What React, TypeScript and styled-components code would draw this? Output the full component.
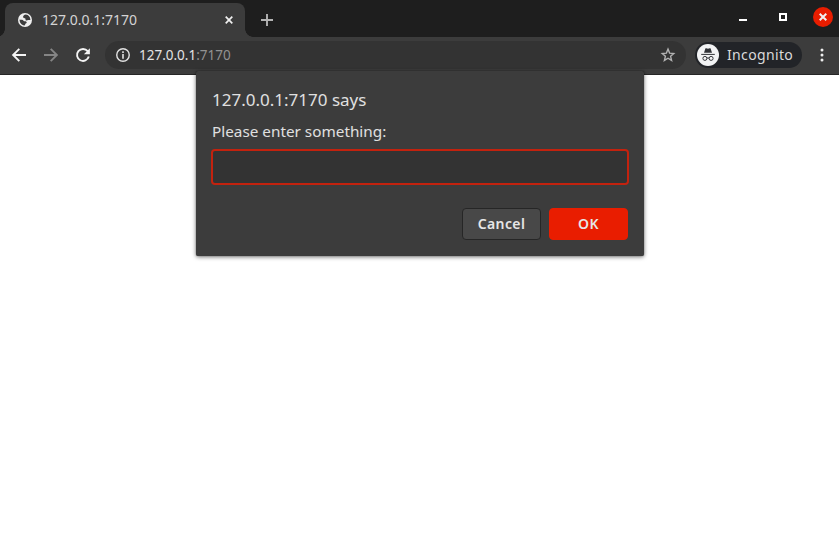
import React from 'react';
import styled, { createGlobalStyle } from 'styled-components';

const GlobalStyle = createGlobalStyle`
  * { box-sizing: border-box; }
  html, body { margin: 0; padding: 0; background: #fff; overflow: hidden; }
  body, button, input { font-family: "Noto Sans", "Open Sans", sans-serif; }
`;

const Browser = styled.div`
  width: 839px;
  height: 550px;
  display: flex;
  flex-direction: column;
  background: #fff;
  position: relative;
`;

const TabStrip = styled.header`
  height: 37px;
  flex: none;
  display: flex;
  align-items: flex-start;
  padding: 3px 6px 0 5px;
  background: #1e1e1e;
`;

const Tab = styled.div`
  width: 240px;
  height: 34px;
  display: flex;
  align-items: center;
  padding: 0 10px 0 13px;
  background: #3c3c3c;
  border-radius: 8px 8px 0 0;
  position: relative;

  &::before, &::after {
    content: "";
    position: absolute;
    bottom: 0;
    width: 8px;
    height: 8px;
  }
  &::before {
    left: -8px;
    background: radial-gradient(circle at 0 0, transparent 7.5px, #3c3c3c 8px);
  }
  &::after {
    right: -8px;
    background: radial-gradient(circle at 100% 0, transparent 7.5px, #3c3c3c 8px);
  }
`;

const TabTitle = styled.span`
  flex: 1;
  margin-left: 10px;
  font-size: 14px;
  line-height: 20px;
  color: #d4d4d4;
  white-space: nowrap;
`;

const IconButton = styled.button<{ $w: number; $h: number }>`
  width: ${(p) => p.$w}px;
  height: ${(p) => p.$h}px;
  flex: none;
  display: flex;
  align-items: center;
  justify-content: center;
  padding: 0;
  border: 0;
  background: transparent;
`;

const NewTab = styled(IconButton)`
  margin: 9px 0 0 14px;
`;

const WindowControls = styled.div`
  margin: 3px 0 0 auto;
  display: flex;
  align-items: center;
  gap: 20px;
`;

const CloseWindow = styled(IconButton)`
  border-radius: 50%;
  background: #e91d00;
`;

const Toolbar = styled.nav`
  height: 38px;
  flex: none;
  display: flex;
  align-items: center;
  padding: 0 9px 1px 11px;
  background: #3c3c3c;
  border-bottom: 1px solid #262626;
`;

const NavButtons = styled.div`
  display: flex;
  gap: 16px;
`;

const Omnibox = styled.div`
  width: 581px;
  height: 28px;
  margin-left: 14px;
  display: flex;
  align-items: center;
  padding: 0 10px;
  border-radius: 14px;
  background: #333;
`;

const Url = styled.span`
  flex: 1;
  margin-left: 8px;
  font-size: 13.5px;
  line-height: 20px;
  color: #e4e4e4;
`;

const Port = styled.span`
  color: #929292;
`;

const Profile = styled.div`
  width: 107px;
  height: 26px;
  margin-left: 9px;
  display: flex;
  align-items: center;
  padding-left: 2px;
  border-radius: 13px;
  background: #222428;
  color: #dadada;
  font-size: 14px;
  letter-spacing: 0.35px;
`;

const ProfileName = styled.span`
  margin-left: 8px;
  line-height: 20px;
`;

const MenuButton = styled(IconButton)`
  margin-left: 12px;
  margin-right: -1px;
`;

const Dialog = styled.section`
  position: absolute;
  left: 196px;
  top: 71px;
  width: 448px;
  height: 185px;
  padding: 16px 15px 0 15px;
  display: flex;
  flex-direction: column;
  background: #3c3c3c;
  border-radius: 2px;
  box-shadow: 0 0 1px rgba(0, 0, 0, 0.5), 0 1px 4px rgba(0, 0, 0, 0.55);
  color: #e0e0e0;
`;

const Heading = styled.h1`
  margin: 0 0 0 1px;
  font-size: 17px;
  font-weight: 400;
  line-height: 26px;
`;

const Message = styled.p`
  margin: 5px 0 0 1px;
  font-size: 15.3px;
  line-height: 26px;
`;

const Field = styled.input`
  display: block;
  width: 418px;
  height: 36px;
  margin-top: 5px;
  padding: 0 8px;
  border: 2px solid #c3220e;
  border-radius: 4px;
  outline: none;
  background: #333;
  color: #e0e0e0;
  font-size: 15px;
`;

const Actions = styled.div`
  margin: 23px 1px 0 0;
  display: flex;
  justify-content: flex-end;
  gap: 8px;
`;

const ActionButton = styled.button<{ $primary?: boolean }>`
  width: 79px;
  height: 32px;
  padding: 0;
  border: 1px solid ${(p) => (p.$primary ? '#e91d00' : '#262626')};
  border-radius: 4px;
  background: ${(p) => (p.$primary ? '#e91d00' : '#484848')};
  color: #e6e6e6;
  font-size: 14px;
  font-weight: 600;
  line-height: 20px;
  letter-spacing: 0.4px;
`;

const Globe = () => (
  <svg width="14" height="14" viewBox="0 0 14 14">
    <circle cx="7" cy="7" r="7" fill="#efefef" />
    <path
      d="M7.9 1.5C6 1.7 4.9 2.8 5.1 4.2c.3 1 1.5.8 2.2 1.3.6.6-.1 1.4.6 1.9.9.5 1.6-.1 2.4-.3.8-.1 1.4.1 2.1-.2C12.3 4 10.6 1.8 7.9 1.5ZM1.6 6.4c-.1 3.3 1.9 5.6 4.7 6 .9 0 .7-1.1 1-1.5.5-.5 1.5-.5 1.4-1.4-.1-.9-1-1.1-1.9-1.2-.9 0-1.2-.9-2-1.4-1-.5-2.1-.1-3.2-.5Z"
      fill="#3c3c3c"
    />
  </svg>
);

const Cross = ({ width }: { width: number }) => (
  <svg width="8" height="8" viewBox="0 0 8 8">
    <path d="M.7.7 7.3 7.3M7.3.7.7 7.3" stroke="#f0f0f0" strokeWidth={width} />
  </svg>
);

const Arrow = ({ forward = false }: { forward?: boolean }) => (
  <svg width="16" height="16" viewBox="0 0 16 16">
    <path
      d={forward ? 'M1 8h13M7.7 1.8 13.9 8l-6.2 6.2' : 'M15 8H2M8.3 1.8 2.1 8l6.2 6.2'}
      fill="none"
      stroke={forward ? '#858585' : '#f4f4f4'}
      strokeWidth="1.9"
    />
  </svg>
);

const Reload = () => (
  <svg width="16" height="16" viewBox="0 0 16 16">
    <path d="M12.7 4.2A6 6 0 1 0 13.8 9.6" fill="none" stroke="#f4f4f4" strokeWidth="1.9" />
    <path d="M14.9 1.2v6H8.9Z" fill="#f4f4f4" />
  </svg>
);

const Info = () => (
  <svg width="16" height="16" viewBox="0 0 16 16">
    <circle cx="8" cy="8" r="6.25" fill="none" stroke="#e2e2e2" strokeWidth="1.4" />
    <path d="M8 4.3v1.6M8 7v4.7" stroke="#e2e2e2" strokeWidth="1.6" />
  </svg>
);

const Star = () => (
  <svg width="16" height="16" viewBox="0 0 16 16">
    <path
      d="m8 2.1 1.6 4 4.2.4-3.2 2.8 1 4.1L8 11.2l-3.6 2.2 1-4.1-3.2-2.8 4.2-.4Z"
      fill="none"
      stroke="#b2b2b2"
      strokeWidth="1.4"
    />
  </svg>
);

const Incognito = () => (
  <svg width="22" height="22" viewBox="0 0 22 22">
    <circle cx="11" cy="11" r="11" fill="#f2f3f4" />
    <path d="m7 8.8 1.3-4c.2-.5.5-.6 1-.5l1.7.4 1.7-.4c.5-.1.8 0 1 .5l1.3 4Z" fill="#303236" />
    <path d="M4.2 10.4h13.6" stroke="#303236" strokeWidth="1" />
    <g fill="none" stroke="#303236" strokeWidth="1">
      <circle cx="7.9" cy="14.4" r="2" />
      <circle cx="14.1" cy="14.4" r="2" />
      <path d="M9.9 14.2q1.1-.7 2.2 0" />
    </g>
  </svg>
);

export default function App() {
  return (
    <>
      <GlobalStyle />
      <Browser>
        <TabStrip>
          <Tab>
            <Globe />
            <TabTitle>127.0.0.1:7170</TabTitle>
            <IconButton $w={12} $h={16} aria-label="Close tab">
              <Cross width={1.7} />
            </IconButton>
          </Tab>
          <NewTab $w={16} $h={16} aria-label="New tab">
            <svg width="12" height="12" viewBox="0 0 12 12">
              <path d="M6 0v12M0 6h12" stroke="#b4b4b4" strokeWidth="1.9" />
            </svg>
          </NewTab>
          <WindowControls>
            <IconButton $w={20} $h={22} aria-label="Minimize">
              <svg width="8" height="12" viewBox="0 0 8 12">
                <path d="M0 9h8" stroke="#fff" strokeWidth="2" />
              </svg>
            </IconButton>
            <IconButton $w={20} $h={22} aria-label="Maximize">
              <svg width="8" height="8" viewBox="0 0 8 8">
                <path d="M1 1h6v6H1Z" fill="none" stroke="#fff" strokeWidth="2" />
              </svg>
            </IconButton>
            <CloseWindow $w={20} $h={20} aria-label="Close window">
              <Cross width={2} />
            </CloseWindow>
          </WindowControls>
        </TabStrip>

        <Toolbar>
          <NavButtons>
            <IconButton $w={16} $h={16} aria-label="Back"><Arrow /></IconButton>
            <IconButton $w={16} $h={16} aria-label="Forward"><Arrow forward /></IconButton>
            <IconButton $w={16} $h={16} aria-label="Reload"><Reload /></IconButton>
          </NavButtons>
          <Omnibox>
            <Info />
            <Url>127.0.0.1<Port>:7170</Port></Url>
            <Star />
          </Omnibox>
          <Profile>
            <Incognito />
            <ProfileName>Incognito</ProfileName>
          </Profile>
          <MenuButton $w={16} $h={16} aria-label="Menu">
            <svg width="4" height="14" viewBox="0 0 4 14" fill="#eee">
              <circle cx="2" cy="2" r="1.5" />
              <circle cx="2" cy="7" r="1.5" />
              <circle cx="2" cy="12" r="1.5" />
            </svg>
          </MenuButton>
        </Toolbar>

        <Dialog role="dialog">
          <Heading>127.0.0.1:7170 says</Heading>
          <Message>Please enter something:</Message>
          <Field aria-label="Response" />
          <Actions>
            <ActionButton>Cancel</ActionButton>
            <ActionButton $primary>OK</ActionButton>
          </Actions>
        </Dialog>
      </Browser>
    </>
  );
}
